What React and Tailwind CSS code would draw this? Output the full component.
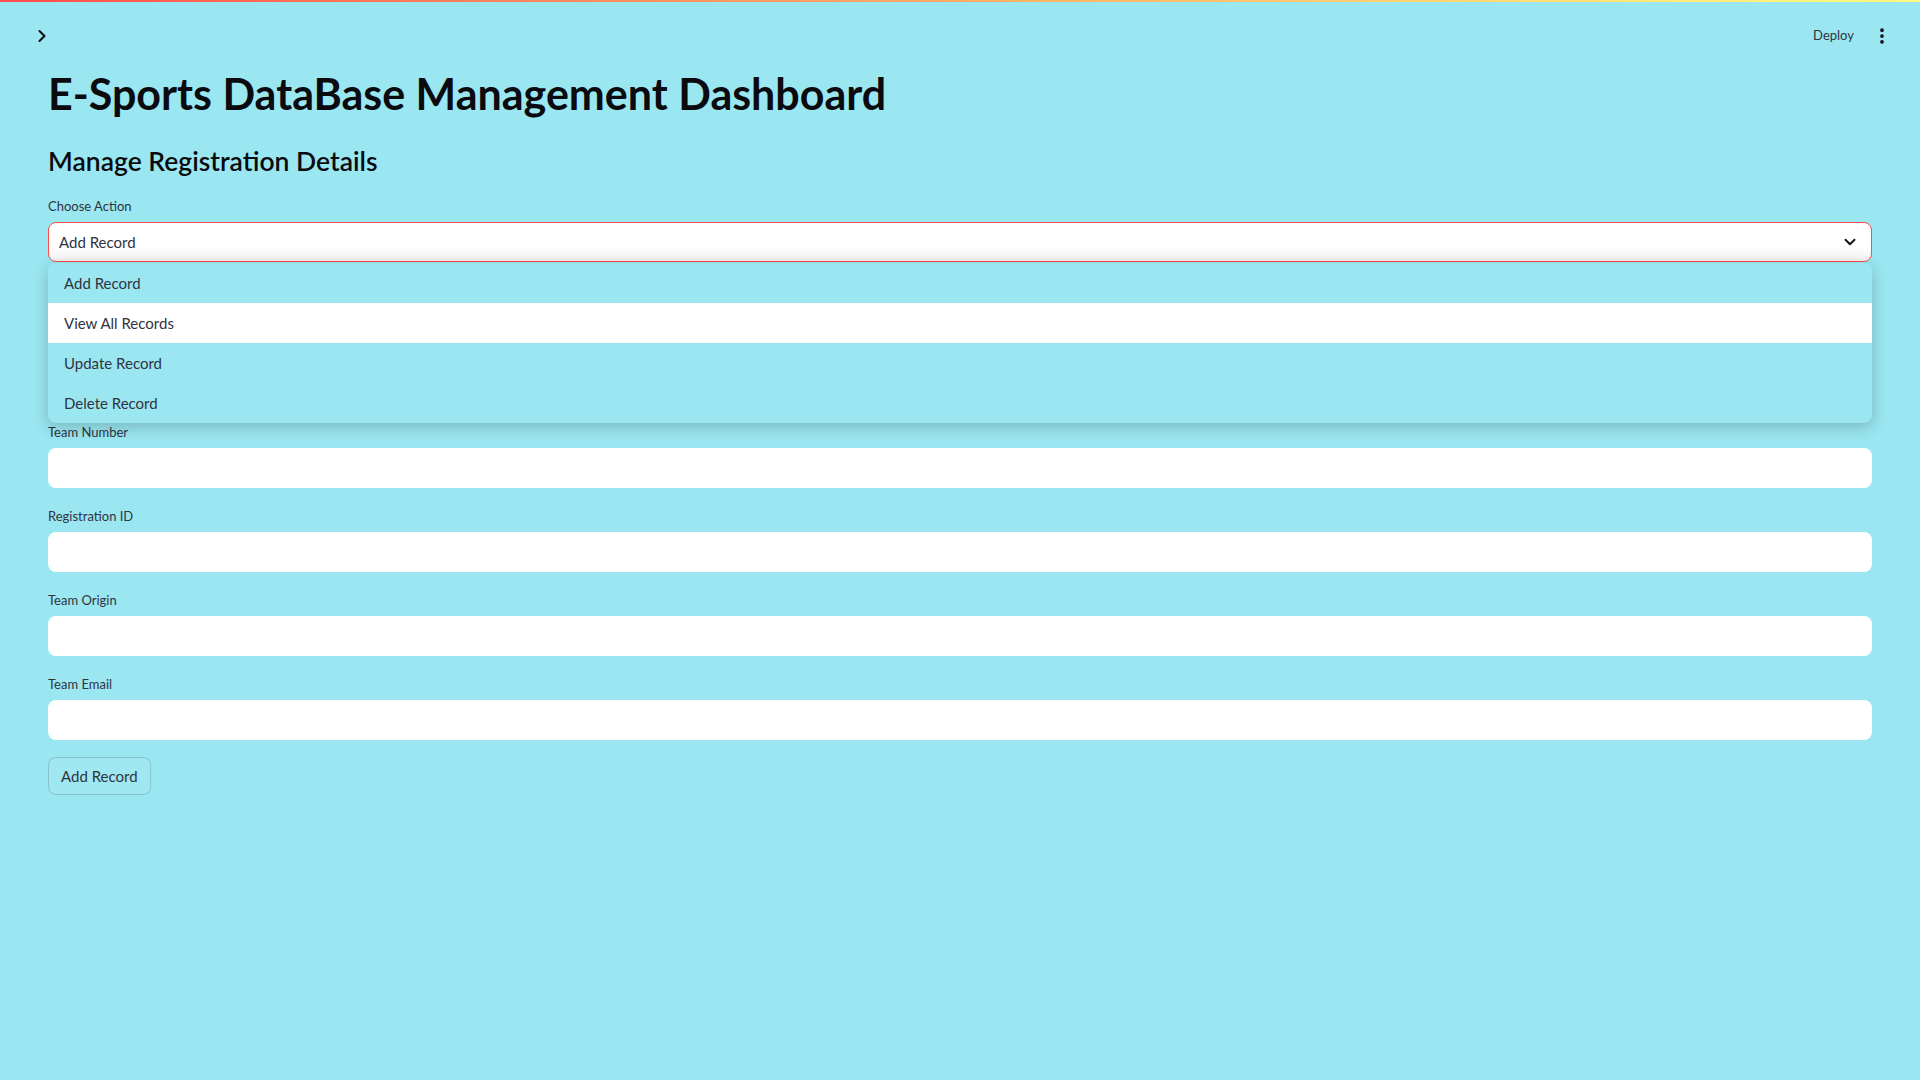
import React from "react";
import { ChevronRight, ChevronDown, EllipsisVertical } from "lucide-react";

const font = { fontFamily: "Lato, 'Noto Sans', sans-serif" };

function Field({ label }) {
  return (
    <div className="pt-[18px]">
      <div className="h-[20px] text-[13px] leading-[20px] text-[#31333f]">{label}</div>
      <div className="mt-[6px] h-[40px] rounded-lg bg-white"></div>
    </div>
  );
}

export default function App() {
  const items = ["Add Record", "View All Records", "Update Record", "Delete Record"];
  return (
    <div className="min-h-screen bg-[#9ae7f1] text-[#31333f]" style={font}>
      <div className="h-[2px] bg-gradient-to-r from-[#ff4b4b] to-[#fffd80]"></div>
      <header className="flex h-[68px] items-center justify-between pl-[32px] pr-[28px]">
        <ChevronRight size={20} strokeWidth={2.5} className="text-[#111]" />
        <div className="flex items-center gap-[18px]">
          <span className="text-[13px] text-[#31333f]">Deploy</span>
          <EllipsisVertical size={20} strokeWidth={2.5} className="text-[#111]" />
        </div>
      </header>
      <main className="px-12">
        <h1 className="mt-[-2px] text-[43px] font-bold leading-[52px] text-[#0b0b0f]">
          E-Sports DataBase Management Dashboard
        </h1>
        <h3 className="mt-[23px] text-[26.5px] font-semibold leading-[36px] text-[#0b0b0f]">
          Manage Registration Details
        </h3>
        <div className="relative">
          <div className="pt-[17px]">
            <div className="h-[20px] text-[13px] leading-[20px]">Choose Action</div>
            <div className="mt-[6px] flex h-[40px] items-center justify-between rounded-lg border border-[#ff4b4b] bg-gradient-to-b from-white from-60% to-[#f3f3f3] pl-[10px] pr-[12px]">
              <span className="text-[15px] text-[#31333f]">Add Record</span>
              <ChevronDown size={18} strokeWidth={2.5} className="text-[#111]" />
            </div>
          </div>
          <div className="absolute left-0 right-0 top-[84px] z-10 overflow-hidden rounded-lg bg-[#9ae7f1] shadow-[0_4px_16px_rgba(0,0,0,0.22)]">
            {items.map((it, i) => (
              <div
                key={it}
                className={
                  "flex h-[40px] items-center px-4 text-[15px] text-[#31333f] " +
                  (i === 1 ? "bg-white" : "")
                }
              >
                {it}
              </div>
            ))}
          </div>
          <div className="h-[142px]"></div>
        </div>
        <Field label="Team Number" />
        <Field label="Registration ID" />
        <Field label="Team Origin" />
        <Field label="Team Email" />
        <button className="mt-[17px] h-[38px] rounded-lg border border-[#31333f]/20 bg-white/5 px-[12px] text-[15px] text-[#31333f]">
          Add Record
        </button>
      </main>
    </div>
  );
}
